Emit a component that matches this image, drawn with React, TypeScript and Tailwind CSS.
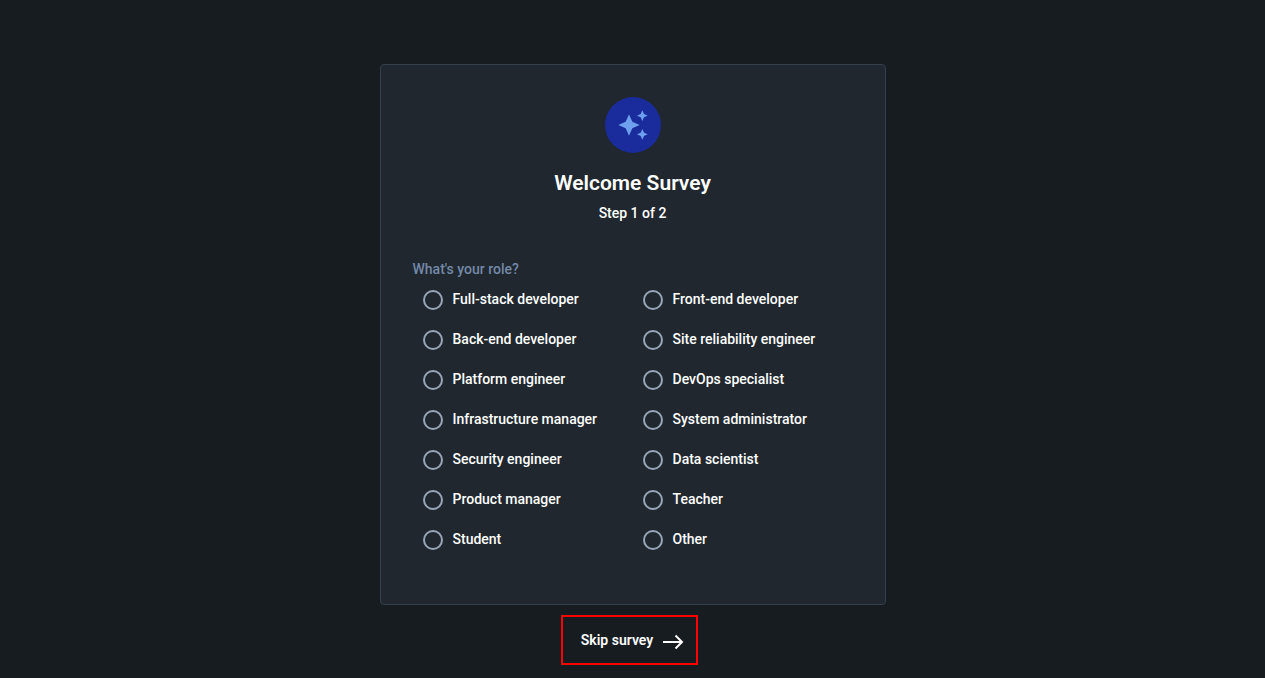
const roles = [
  'Full-stack developer',
  'Front-end developer',
  'Back-end developer',
  'Site reliability engineer',
  'Platform engineer',
  'DevOps specialist',
  'Infrastructure manager',
  'System administrator',
  'Security engineer',
  'Data scientist',
  'Product manager',
  'Teacher',
  'Student',
  'Other',
];

function SparkleBadge() {
  return (
    <div className="flex size-14 items-center justify-center rounded-full bg-[#1a2c9c]">
      <svg viewBox="0 0 24 24" className="size-8 fill-[#6ea0ef]" aria-hidden="true">
        <path d="M19 9l1.25-2.75L23 5l-2.75-1.25L19 1l-1.25 2.75L15 5l2.75 1.25L19 9zm-7.5.5L9 4 6.5 9.5 1 12l5.5 2.5L9 20l2.5-5.5L17 12l-5.5-2.5zM19 15l-1.25 2.75L15 19l2.75 1.25L19 23l1.25-2.75L23 19l-2.75-1.25L19 15z" />
      </svg>
    </div>
  );
}

function RoleOption({ role }: { role: string }) {
  return (
    <label className="flex h-10 cursor-pointer items-center gap-2.5 pl-2.5">
      <input
        type="radio"
        name="role"
        value={role}
        className="size-5 shrink-0 cursor-pointer appearance-none rounded-full border-2 border-[#98a5b8] checked:border-6 checked:border-[#6ea0ef]"
      />
      <span className="pb-0.5">{role}</span>
    </label>
  );
}

export default function App() {
  return (
    <main className="flex min-h-screen flex-col items-center bg-[#171c20] px-4 pt-16 font-['Roboto',sans-serif] text-sm font-medium text-white">
      <section className="w-full max-w-[506px] rounded border border-[#333f4b] bg-[#20272e] px-8 pt-8 pb-11">
        <header className="flex flex-col items-center">
          <SparkleBadge />
          <h1 className="mt-4 text-[21px] leading-7 font-semibold">Welcome Survey</h1>
          <p className="mt-1.5 leading-5">Step 1 of 2</p>
        </header>
        <fieldset className="mt-9">
          <legend className="leading-5 text-[#7389a8]">What&apos;s your role?</legend>
          <div className="grid grid-cols-2 pt-px">
            {roles.map((role) => (
              <RoleOption key={role} role={role} />
            ))}
          </div>
        </fieldset>
      </section>
      <button
        type="button"
        className="mt-2.5 mr-1.5 flex h-[50px] cursor-pointer items-center gap-2 border-2 border-[#ff0000] pr-[11px] pl-[18px] font-semibold"
      >
        Skip survey
        <svg viewBox="0 0 24 24" className="size-6" fill="none" stroke="currentColor" strokeWidth="2" aria-hidden="true">
          <path d="M2 14h19M14.5 7.5l6.5 6.5-6.5 6.5" />
        </svg>
      </button>
    </main>
  );
}
